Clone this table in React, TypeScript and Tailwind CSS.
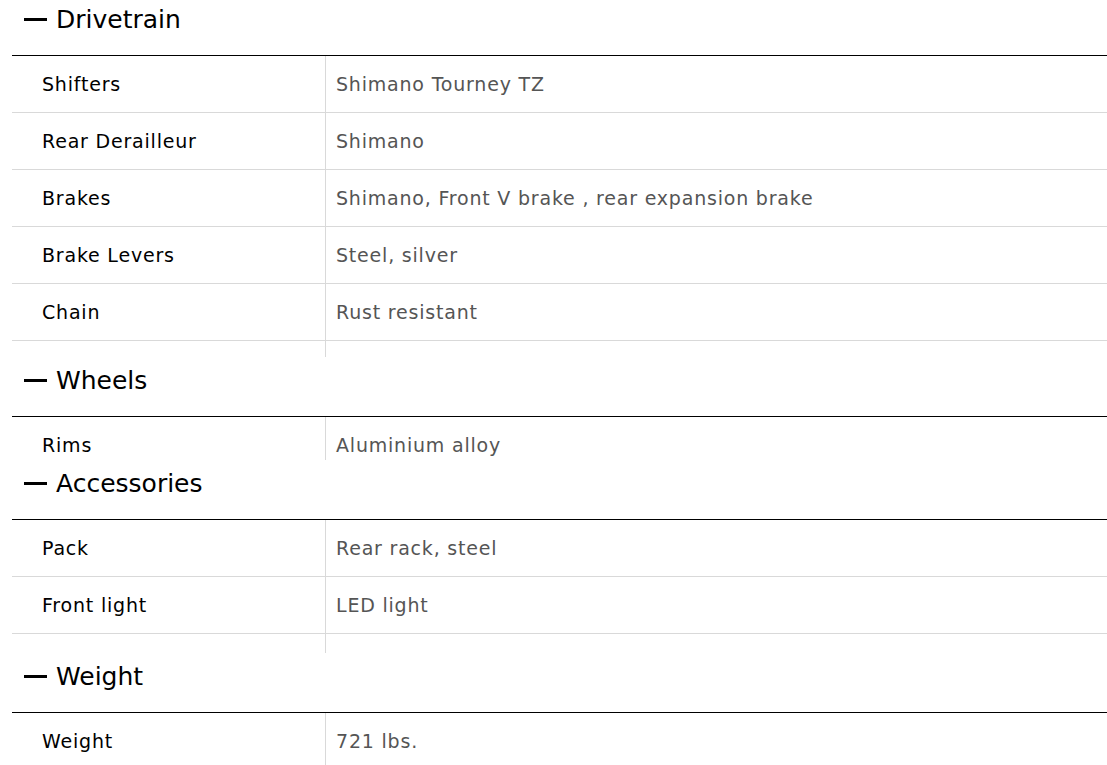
import React from "react";

type Row = [string, string];
type Section = { title: string; rows: Row[]; body: number; header: number; mt?: number };

const sections: Section[] = [
  {
    title: "Drivetrain",
    header: 59,
    mt: -4,
    body: 302,
    rows: [
      ["Shifters", "Shimano Tourney TZ"],
      ["Rear Derailleur", "Shimano"],
      ["Brakes", "Shimano, Front V brake , rear expansion brake"],
      ["Brake Levers", "Steel, silver"],
      ["Chain", "Rust resistant"],
      ["Crankset", "Steel, 42T"],
    ],
  },
  {
    title: "Wheels",
    header: 59,
    body: 44,
    rows: [
      ["Rims", "Aluminium alloy"],
      ["Tyres", "700 x 38C"],
    ],
  },
  {
    title: "Accessories",
    header: 59,
    body: 134,
    rows: [
      ["Pack", "Rear rack, steel"],
      ["Front light", "LED light"],
      ["Pedals", "Suitable for city bikes"],
    ],
  },
  {
    title: "Weight",
    header: 59,
    body: 60,
    rows: [["Weight", "721 lbs."]],
  },
];

export default function App() {
  return (
    <div
      className="w-[1107px] h-[765px] overflow-hidden bg-white"
      style={{ fontFamily: '"DejaVu Sans", sans-serif' }}
    >
      {sections.map((s) => (
        <div key={s.title} style={{ marginTop: s.mt ?? 0 }}>
          <div className="flex items-center pl-[24px]" style={{ height: s.header }}>
            <div className="flex items-center h-full pb-[12px]">
              <span className="block w-[23px] h-[3px] bg-black mr-[9px]" />
              <span className="text-[25px] leading-none text-black">{s.title}</span>
            </div>
          </div>
          <div className="ml-[12px] overflow-hidden border-t border-black" style={{ height: s.body }}>
            {s.rows.map(([k, v]) => (
              <div key={k} className="flex h-[57px] border-b border-[#d9d9d9]">
                <div className="w-[314px] shrink-0 flex items-center pl-[30px] text-[19px] tracking-[0.8px] text-black border-r border-[#d9d9d9]">
                  {k}
                </div>
                <div className="flex items-center pl-[10px] text-[19px] tracking-[0.8px] text-[#555]">
                  {v}
                </div>
              </div>
            ))}
          </div>
        </div>
      ))}
    </div>
  );
}
